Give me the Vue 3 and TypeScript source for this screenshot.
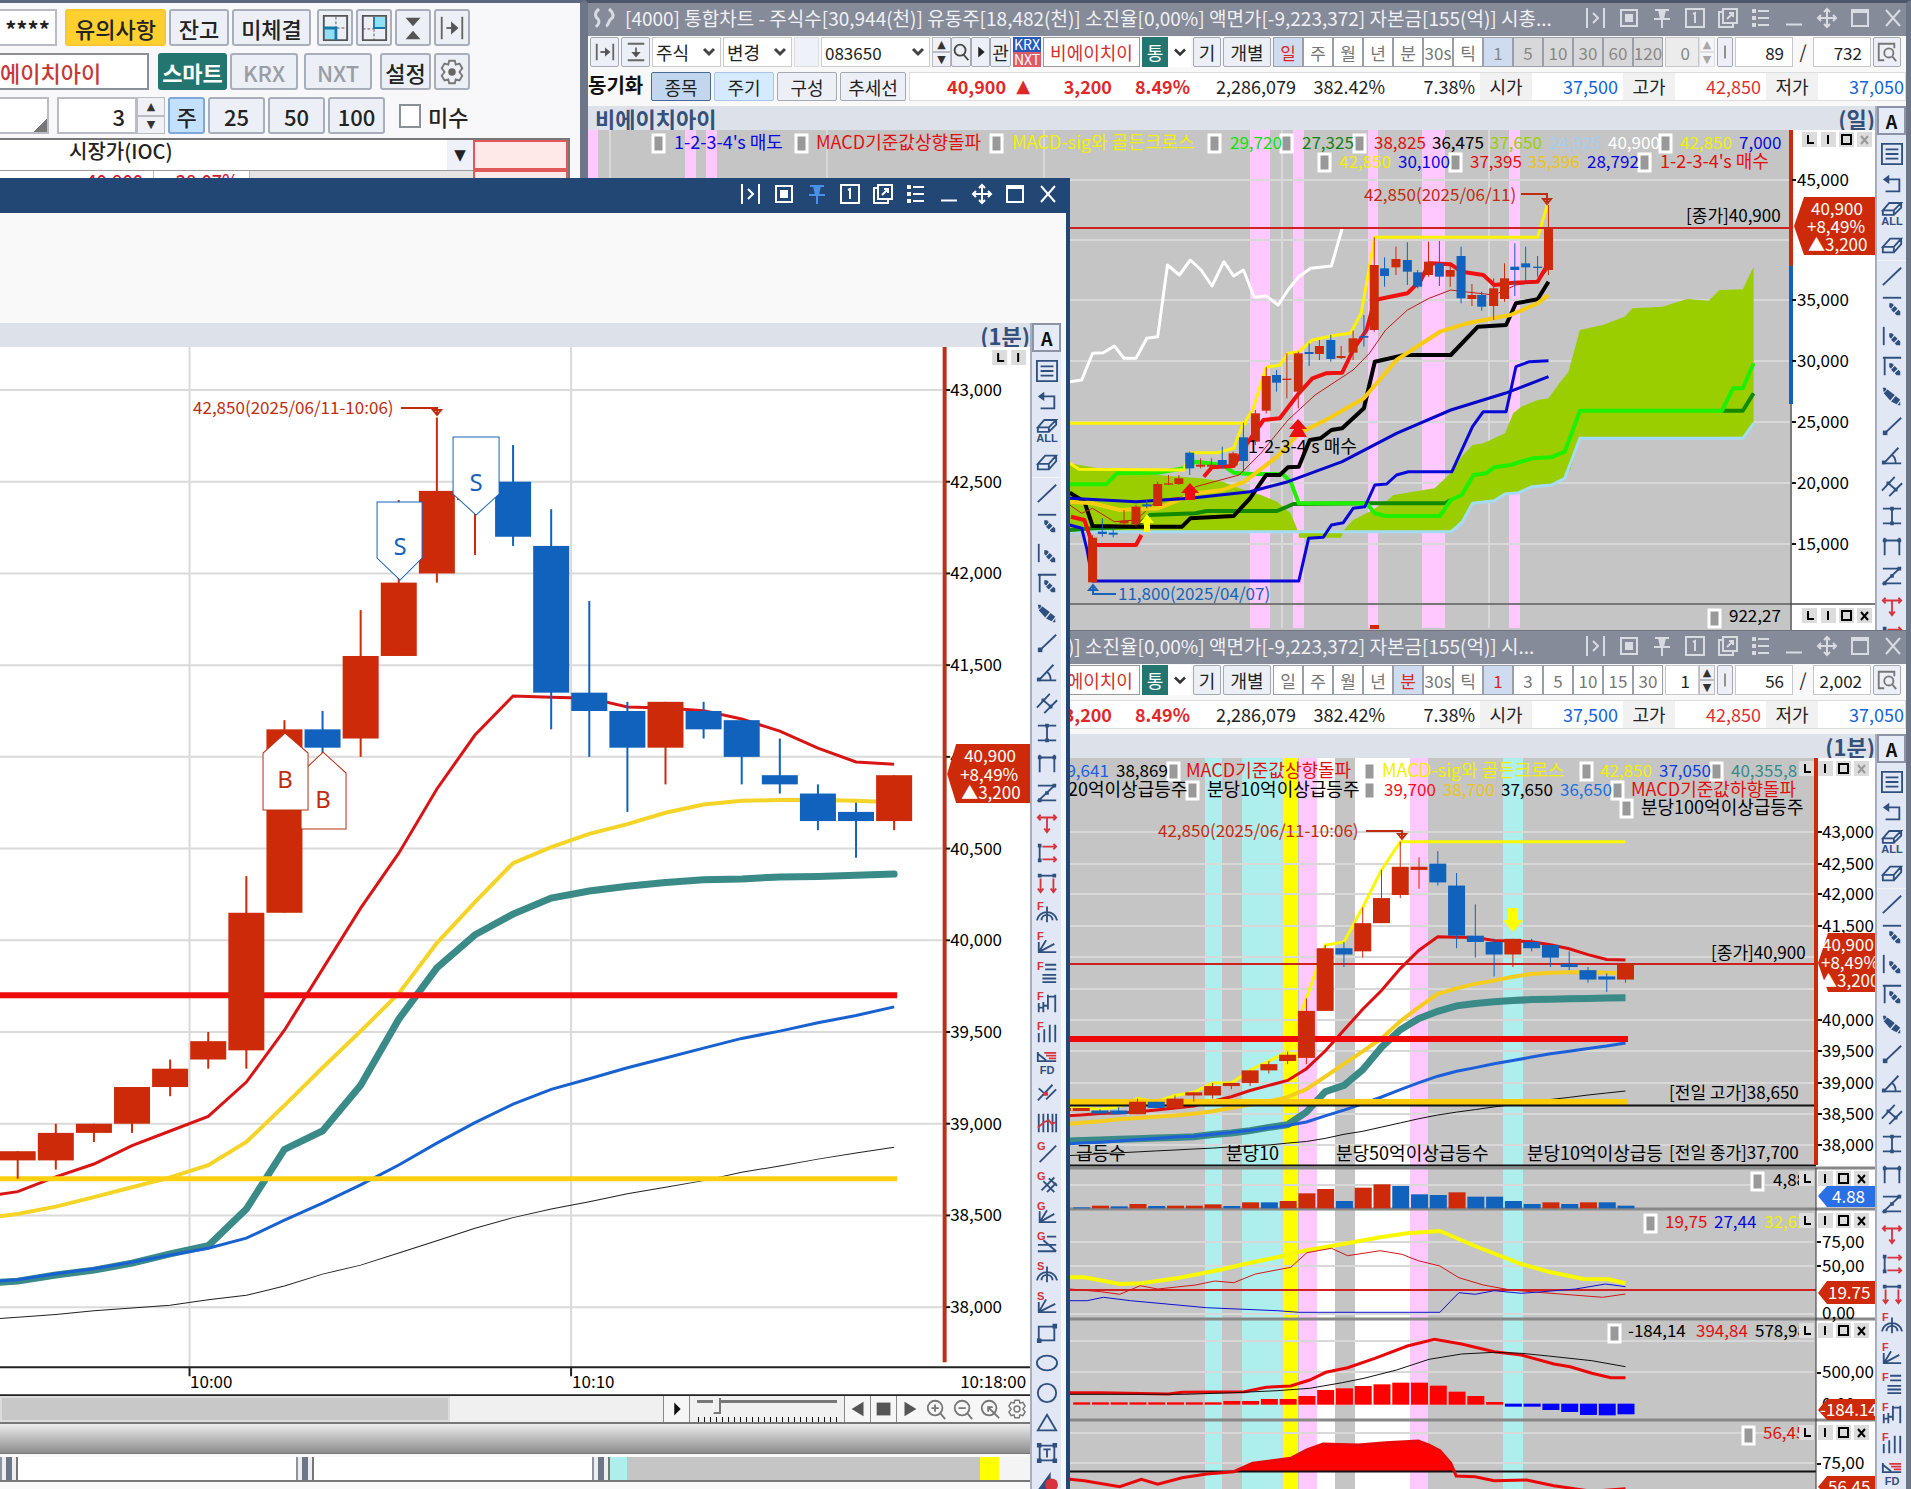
<script setup lang="ts">
type Pt = [number, number]
type Label = [number, number, string, string, number?]

/* ---------- one-minute series, newest bar first: open, close, high, low ---------- */
const bars: number[][] = [
  [40650, 40900, 40900, 40600], [40700, 40650, 40750, 40450], [40800, 40650, 40850, 40600],
  [40900, 40850, 41100, 40800], [41200, 41000, 41200, 40850], [41250, 41150, 41300, 41100],
  [41050, 41300, 41300, 40850], [41250, 41050, 41300, 40700], [41350, 41250, 41850, 41000],
  [42150, 41350, 42350, 41150], [42500, 42200, 42700, 42150], [42400, 42450, 42600, 42100],
  [42000, 42450, 42850, 41950], [41550, 41950, 42400, 41550], [41100, 41550, 41800, 41000],
  [41150, 41050, 41250, 40850], [40150, 41150, 41200, 40150], [39400, 40150, 40350, 39300],
  [39350, 39450, 39500, 39300], [39200, 39300, 39350, 39150], [39000, 39200, 39200, 38950],
  [38950, 39000, 39000, 38900], [38800, 38950, 39000, 38750], [38800, 38850, 38850, 38700],
  [38600, 38750, 38800, 38600], [38700, 38600, 38700, 38600], [38500, 38700, 38750, 38500],
  [38560, 38500, 38620, 38500], [38560, 38540, 38580, 38520], [38580, 38600, 38600, 38560],
  [38580, 38600, 38600, 38560],
]
const maRed = [40960, 40972, 41048, 41140, 41206, 41252, 41266, 41272, 41320, 41325, 41332, 41119, 40825, 40475, 40175, 39843, 39510, 39227, 39040, 38960, 38880, 38780, 38710, 38630, 38600, 38570, 38540, 38520, 38510, 38490, 38470]
const maGold = [40753, 40760, 40765, 40765, 40760, 40740, 40695, 40633, 40580, 40508, 40421, 40208, 39985, 39710, 39505, 39305, 39100, 38900, 38774, 38708, 38654, 38600, 38548, 38508, 38480, 38460, 38440, 38420, 38390, 38365, 38340]
const maTeal = [40361, 40355, 40348, 40345, 40335, 40330, 40315, 40295, 40268, 40230, 40143, 40030, 39850, 39570, 39210, 38960, 38860, 38535, 38335, 38290, 38240, 38202, 38175, 38142, 38130, 38120, 38110, 38100, 38090, 38080, 38070]
const maBlue = [39637, 39590, 39550, 39505, 39465, 39412, 39358, 39305, 39245, 39187, 39107, 39006, 38894, 38775, 38667, 38567, 38474, 38376, 38321, 38284, 38245, 38209, 38182, 38150, 38135, 38115, 38095, 38075, 38055, 38040, 38020]
const maBlack = [38872, 38840, 38807, 38770, 38735, 38690, 38654, 38618, 38574, 38535, 38488, 38430, 38362, 38295, 38229, 38180, 38115, 38065, 38040, 38010, 37995, 37980, 37960, 37945, 37930, 37915, 37900, 37885, 37870, 37850, 37835]

const RED = '#cc2a08'
const BLUE = '#1062bd'

function scale(x0: number, step: number, top: number, per500: number) {
  const x = (k: number) => x0 - k * step
  const y = (p: number) => top + ((43000 - p) / 500) * per500
  const line = (s: number[]) => s.map((p, k) => `${x(k).toFixed(1)},${y(p).toFixed(1)}`).join(' ')
  const candles = (n: number, w: number) => bars.slice(0, n).map((b, k) => ({
    x: x(k), w, top: y(Math.max(b[0], b[1])), h: Math.max(3, y(Math.min(b[0], b[1])) - y(Math.max(b[0], b[1]))),
    hi: y(b[2]), lo: y(b[3]), color: b[1] > b[0] ? RED : BLUE,
  }))
  return { x, y, line, candles }
}
const main = scale(894, 38.1, 390, 91.7)
const mini = scale(1625.5, 18.77, 832.3, 31.33)
const mainCandles = main.candles(24, 36)
const miniCandles = mini.candles(31, 17)
const mainTicks = [43000, 42500, 42000, 41500, 41000, 40500, 40000, 39500, 39000, 38500, 38000]
const fmt = (n: number) => n.toLocaleString('en-US')
const highs = bars.map((b, k) => (k < 12 ? 42850 : b[2]))

/* ---------- plot units of the right-hand charts ---------- */
const plot = (top: number) => (pts: Pt[]) => pts.map(([a, b]) => `${(1060 + a / 1.8425).toFixed(1)},${(top + b / 3).toFixed(1)}`).join(' ')
const dp = plot(180)
const sp = plot(1140)

const cloud = [
  dp([[18, 850], [60, 862], [100, 870], [150, 880], [200, 888], [260, 895], [300, 905], [330, 925], [370, 945], [400, 965], [425, 1000], [440, 1060], [440, 1052], [18, 1052]]),
  dp([[440, 1052], [522, 1052], [540, 1020], [570, 995], [600, 965], [615, 945], [650, 935], [690, 925], [720, 880], [740, 830], [760, 795], [780, 790], [820, 760], [835, 700], [850, 680], [880, 660], [900, 655], [920, 610], [937, 575], [958, 450], [1000, 435], [1040, 410], [1055, 385], [1110, 380], [1155, 357], [1195, 362], [1215, 330], [1258, 328], [1278, 260], [1278, 725], [1258, 770], [958, 775], [940, 870], [925, 900], [900, 915], [870, 918], [840, 940], [820, 940], [800, 962], [765, 965], [740, 1020], [720, 1052], [522, 1056], [518, 1073], [440, 1073]]),
]
const dayLines = [
  { c: '#a5dcf5', w: 3, p: dp([[18, 1055], [720, 1055], [740, 1030], [760, 970], [800, 962], [820, 942], [845, 938], [870, 920], [905, 915], [930, 895], [945, 830], [958, 775], [1258, 775], [1278, 730]]) },
  { c: '#128a00', w: 4, p: dp([[18, 1050], [60, 1045], [140, 1040], [165, 1005], [250, 1000], [270, 993], [400, 993], [430, 972], [565, 970], [710, 970], [720, 960]]) },
  { c: '#128a00', w: 4, p: dp([[1220, 692], [1258, 692], [1278, 640]]) },
  { c: '#1ef000', w: 4, p: dp([[18, 913], [85, 913], [105, 880], [180, 878], [228, 865], [250, 845], [300, 855], [320, 878], [350, 882], [410, 882], [425, 905], [440, 970], [565, 970], [580, 1000], [600, 1008], [700, 1008], [720, 960], [740, 945], [762, 885], [785, 880], [800, 862], [830, 855], [870, 835], [905, 832], [930, 815], [945, 750], [958, 692], [1220, 692], [1240, 625], [1258, 625], [1278, 550]]) },
  { c: '#fff200', w: 3, p: dp([[18, 730], [345, 730]]) },
  { c: '#fff200', w: 3, p: dp([[18, 850], [35, 868], [228, 870], [240, 818], [290, 818], [320, 805], [335, 740], [355, 690], [380, 562], [405, 555], [420, 520], [440, 515], [465, 480], [510, 465], [535, 460], [555, 400], [580, 172], [880, 172], [898, 75]]) },
  { c: '#ffffff', w: 3, p: dp([[18, 605], [40, 600], [60, 520], [80, 518], [100, 498], [118, 535], [140, 535], [160, 475], [180, 470], [198, 255], [220, 285], [240, 240], [260, 270], [280, 318], [302, 245], [320, 288], [338, 270], [358, 352], [380, 348], [402, 375], [420, 330], [440, 290], [462, 265], [500, 258], [520, 145]]) },
  { c: '#000000', w: 4, p: dp([[18, 938], [45, 965], [60, 1038], [140, 1040], [225, 1040], [240, 1015], [320, 1008], [350, 955], [365, 920], [380, 885], [405, 885], [420, 862], [440, 860], [460, 780], [480, 775], [500, 750], [520, 745], [560, 685], [580, 545], [635, 525], [720, 525], [770, 440], [822, 435], [840, 370], [880, 358], [900, 305]]) },
  { c: '#f01010', w: 4, p: dp([[20, 1010], [45, 1020], [60, 1095], [140, 1095], [150, 1065]]) },
  { c: '#f01010', w: 4, p: dp([[265, 890], [280, 862], [320, 858], [345, 790], [375, 720], [405, 715], [440, 640], [465, 595], [490, 580], [520, 578], [540, 510], [565, 450], [580, 360], [640, 340], [665, 300], [680, 250], [720, 253], [740, 275], [780, 285], [800, 315], [835, 308], [880, 305], [898, 255]]) },
  { c: '#c81818', w: 1, p: dp([[18, 975], [40, 1000], [60, 985], [100, 1025], [140, 1020], [180, 960], [230, 950], [250, 920], [330, 885], [370, 820], [420, 720], [470, 645], [540, 570], [570, 520], [600, 450], [640, 390], [680, 355], [720, 330], [745, 335], [800, 345], [840, 315], [880, 305], [898, 270]]) },
  { c: '#f8cc10', w: 4, p: dp([[18, 965], [60, 970], [110, 990], [180, 985], [250, 940], [300, 930], [340, 905], [400, 830], [440, 760], [490, 720], [560, 655], [620, 540], [700, 455], [750, 430], [830, 405], [880, 370], [900, 345]]) },
  { c: '#0808c8', w: 3, p: dp([[18, 955], [140, 965], [240, 955], [350, 935], [420, 905], [520, 845], [620, 760], [720, 690], [820, 640], [900, 590]]) },
  { c: '#0808d8', w: 3, p: dp([[18, 1035], [40, 1045], [50, 1110], [60, 1203], [440, 1203], [458, 1075], [485, 1072], [500, 1035], [522, 1028], [540, 985], [562, 980], [580, 915], [602, 912], [620, 885], [642, 875], [722, 875], [760, 740], [780, 695], [822, 695], [840, 560], [865, 545], [900, 542]]) },
]
/* centre, body top, body bottom, wick top, wick bottom, rising */
const dayRaw: number[][] = [
  [60, 1073, 1207, 1065, 1207, 1], [78, 1055, 1062, 1015, 1070, 0], [98, 1058, 1064, 1045, 1072, 0], [118, 1022, 1030, 990, 1035, 1], [140, 980, 1033, 975, 1040, 1],
  [160, 973, 979, 960, 985, 0], [180, 912, 978, 905, 978, 1], [200, 910, 914, 885, 915, 1], [219, 895, 912, 885, 915, 1], [239, 818, 865, 815, 885, 0], [259, 854, 860, 835, 865, 1],
  [279, 854, 860, 835, 870, 1], [299, 840, 855, 800, 865, 0], [319, 820, 857, 815, 860, 1], [338, 772, 843, 728, 875, 0], [360, 700, 785, 690, 795, 1], [380, 588, 692, 562, 700, 1],
  [399, 585, 608, 570, 635, 0], [418, 596, 600, 520, 655, 1], [439, 520, 635, 515, 685, 1], [459, 516, 522, 490, 558, 0], [478, 498, 522, 480, 540, 1], [499, 480, 537, 465, 545, 0],
  [518, 528, 534, 498, 537, 1], [540, 475, 518, 452, 540, 1], [560, 468, 473, 405, 500, 0], [579, 255, 450, 172, 455, 1], [598, 265, 288, 232, 320, 0], [619, 237, 262, 200, 285, 1],
  [640, 240, 275, 187, 315, 0], [659, 277, 320, 270, 325, 0], [679, 245, 285, 185, 290, 1], [699, 250, 290, 183, 318, 0], [719, 270, 290, 255, 320, 1], [739, 228, 355, 200, 370, 0],
  [759, 345, 357, 312, 378, 1], [777, 345, 380, 335, 392, 0], [799, 325, 378, 295, 420, 1], [819, 295, 357, 250, 365, 1], [838, 260, 270, 190, 348, 0], [858, 250, 262, 200, 310, 0],
  [880, 260, 264, 228, 290, 0], [900, 143, 270, 75, 285, 1],
]
const dayCandles = dayRaw.map(([x, t, b, hi, lo, up]) => ({
  x: 1060 + x / 1.8425, w: 9, top: 180 + t / 3, h: (b - t) / 3, hi: 180 + hi / 3, lo: 180 + lo / 3, color: up ? RED : BLUE,
}))
const dayBands: Pt[] = [[588, 10], [685, 11], [706, 11], [1250, 20], [1293, 11], [1368, 10], [1422, 23], [1509, 11]]
const dayTicks: [number, string][] = [[180, '45,000'], [300, '35,000'], [361, '30,000'], [422, '25,000'], [483, '20,000'], [544, '15,000']]
const dayLabels: Label[] = [
  [674, 149, "1-2-3-4's 매도", '#0808e0', 1], [816, 149, 'MACD기준값상향돌파', '#e01010', 1], [1012, 149, 'MACD-sig와 골든크로스', '#f0f000', 1],
  [1230, 149, '29,720', '#10e010'], [1302, 149, '27,325', '#108010'], [1374, 149, '38,825', '#e01010'], [1432, 149, '36,475', '#000'],
  [1490, 149, '37,650', '#9bce00'], [1549, 149, '24,925', '#a5cdeb'], [1608, 149, '40,900', '#fff'], [1680, 149, '42,850', '#f0f000'], [1739, 149, '7,000', '#0808e0'],
  [1339, 168, '42,850', '#f0f000'], [1398, 168, '30,100', '#0808e0'], [1470, 168, '37,395', '#e01010'], [1528, 168, '35,396', '#ecc418'], [1587, 168, '28,792', '#0808e0'],
  [1660, 168, "1-2-3-4's 매수", '#e01010', 1], [1364, 201, '42,850(2025/06/11)', '#c02c10'], [1686, 222, '[종가]40,900', '#000'],
  [1248, 453, "1-2-3-4's 매수", '#000', 1], [1118, 600, '11,800(2025/04/07)', '#1862b8'], [1729, 622, '922,27', '#000'],
]
const dayMarks: Pt[] = [[652, 134], [795, 134], [990, 134], [1208, 134], [1280, 134], [1353, 134], [1659, 134], [1318, 153], [1449, 153], [1638, 153], [1708, 609]]

const minBands: [number, number, string][] = [
  [1205, 17, '#aeeeec'], [1242, 39, '#aeeeec'], [1281, 17, '#ffff00'], [1299, 18, '#ffc8ff'], [1317, 18, '#fff'], [1355, 55, '#fff'], [1410, 18, '#ffc8ff'], [1503, 20, '#aeeeec'],
]
const minTicks: [number, string][] = [[832, '43,000'], [864, '42,500'], [894, '42,000'], [926, '41,500'], [1020, '40,000'], [1051, '39,500'], [1083, '39,000'], [1114, '38,500'], [1145, '38,000']]
const minLabels: Label[] = [
  [1057, 777, '39,641', '#1c5fe0'], [1116, 777, '38,869', '#000'], [1186, 777, 'MACD기준값상향돌파', '#e01010', 1], [1382, 777, 'MACD-sig와 골든크로스', '#f0f000', 1],
  [1600, 777, '42,850', '#f0f000'], [1659, 777, '37,050', '#0c40e0'], [1731, 777, '40,355,8', '#3a8a88'],
  [1068, 796, '20억이상급등주', '#000', 1], [1207, 796, '분당10억이상급등주', '#000', 1], [1384, 796, '39,700', '#f01020'], [1443, 796, '38,700', '#ecc418'],
  [1501, 796, '37,650', '#000'], [1560, 796, '36,650', '#1c6fe0'], [1631, 796, 'MACD기준값하향돌파', '#e01010', 1], [1641, 814, '분당100억이상급등주', '#000', 1],
  [1158, 837, '42,850(2025/06/11-10:06)', '#c02c10'], [1711, 959, '[종가]40,900', '#000'], [1669, 1099, '[전일 고가]38,650', '#000'], [1669, 1159, '[전일 종가]37,700', '#000'],
  [1076, 1160, '급등수', '#000', 1], [1226, 1160, '분당10', '#000', 1], [1336, 1160, '분당50억이상급등수', '#000', 1], [1527, 1160, '분당10억이상급등', '#000', 1],
  [1773, 1186, '4,88', '#000'], [1665, 1228, '19,75', '#e01010'], [1714, 1228, '27,44', '#0808e0'], [1764, 1228, '32,62', '#f0f000'],
  [1628, 1337, '-184,14', '#000'], [1696, 1337, '394,84', '#e01010'], [1755, 1337, '578,98', '#000'], [1763, 1439, '56,45', '#e01010'],
]
const minMarks: Pt[] = [[1167, 762], [1363, 762], [1580, 762], [1710, 762], [1186, 781], [1363, 781], [1611, 781], [1620, 799], [1751, 1172], [1644, 1214], [1608, 1324], [1742, 1426]]
const lixRows: [number, number][] = [[1799, 761], [1799, 1171], [1799, 1213], [1799, 1323], [1799, 1425]]

const volume: [number, number][] = [
  [197, 0], [187, 0], [187, 1], [192, 0], [187, 1], [192, 0], [183, 0], [170, 0], [170, 0], [157, 1], [165, 0], [163, 0], [138, 0], [133, 1], [143, 1], [183, 0],
  [147, 1], [160, 1], [183, 1], [187, 0], [187, 1], [198, 0], [193, 1], [197, 1], [197, 1], [198, 0], [192, 1], [199, 0], [197, 1], [202, 0],
]
const hist = [820, 823, 822, 813, 807, 797, 797, 786, 768, 755, 737, 728, 728, 733, 738, 745, 750, 768, 777, 777, 783, 783, 787, 787, 787, 787, 787, 787, 787, 787]
const subLines = [
  { c: '#f8f800', w: 4, p: sp([[18, 412], [45, 412], [110, 432], [150, 430], [215, 415], [300, 388], [340, 372], [400, 352], [450, 332], [540, 307], [590, 292], [640, 280], [700, 273], [760, 315], [850, 372], [900, 395], [965, 417], [1010, 418], [1042, 430]]) },
  { c: '#d01818', w: 1, p: sp([[18, 447], [75, 455], [110, 463], [148, 437], [180, 447], [250, 435], [285, 423], [320, 428], [360, 402], [425, 382], [455, 338], [500, 325], [530, 347], [590, 332], [630, 343], [660, 362], [700, 378], [735, 413], [780, 435], [830, 450], [890, 458], [1000, 472], [1042, 462]]) },
  { c: '#1010d0', w: 1, p: sp([[18, 482], [50, 482], [80, 472], [130, 482], [270, 503], [400, 512], [440, 517], [700, 517], [735, 458], [765, 463], [800, 452], [850, 460], [890, 455], [950, 447], [1005, 432], [1042, 440]]) },
  { c: '#e80808', w: 3, p: sp([[18, 758], [75, 758], [200, 762], [225, 757], [340, 755], [380, 742], [425, 738], [460, 720], [490, 697], [530, 683], [580, 655], [640, 618], [690, 598], [740, 612], [800, 635], [850, 645], [910, 672], [940, 680], [980, 700], [1015, 713], [1042, 713]]) },
  { c: '#101010', w: 1, p: sp([[18, 763], [230, 763], [320, 758], [400, 752], [460, 745], [520, 728], [560, 715], [620, 690], [680, 658], [740, 642], [800, 637], [850, 640], [900, 648], [980, 662], [1042, 680]]) },
  { c: '#e80808', w: 3, p: sp([[18, 1018], [45, 1022], [110, 1040], [150, 1018], [180, 1033], [225, 1013], [270, 1002], [320, 995], [355, 970], [425, 955], [455, 930], [485, 912], [550, 915], [600, 908], [660, 903], [680, 915], [700, 932], [720, 970], [730, 1008], [765, 1010], [800, 1022], [860, 1020], [910, 1037], [980, 1054], [1042, 1046]]) },
]
const rsiArea = sp([[320, 995], [355, 970], [425, 955], [455, 930], [485, 912], [550, 915], [600, 908], [660, 903], [680, 915], [700, 932], [720, 970], [730, 995]])
const subTicks: [number, string][] = [[1242, '75,00'], [1266, '50,00'], [1313, '0,00'], [1372, '500,00'], [1404, '0,00'], [1463, '75,00']]

/* ---------- windows ---------- */
const windows = [
  {
    id: 'day', title: '[4000] 통합차트 - 주식수[30,944(천)] 유동주[18,482(천)] 소진율[0,00%] 액면가[-9,223,372] 자본금[155(억)] 시총...',
    period: '일', mins: ['1', '5', '10', '30', '60', '120'], off: true, n: '0', pos: '89', total: '732', span: '(일)',
  },
  {
    id: 'min', title: '[4000] 통합차트 - 주식수[30,944(천)] 유동주[18,482(천)] 소진율[0,00%] 액면가[-9,223,372] 자본금[155(억)] 시...',
    period: '분', mins: ['1', '3', '5', '10', '15', '30'], off: false, n: '1', pos: '56', total: '2,002', span: '(1분)',
  },
]
const periods = ['일', '주', '월', '년', '분', '30s', '틱']
const caps: { name: string; d: string; f?: string }[] = [
  { name: '펼치기', d: 'M3 2V22M20 2V22M9 7l5 5-5 5' },
  { name: '화면 고정', d: 'M4 4H20V20H4Z', f: 'M8 8h8v8H8z' },
  { name: '핀', d: 'M5 4H19M4 13H20M12 13V22', f: 'M8 4h8l-2 9h-4z' },
  { name: '화면 번호', d: 'M3 3H21V21H3ZM10 8l2-1V17' },
  { name: '새 창', d: 'M7 3H21V17H7ZM7 6H3V21H17V17M11 13l6-6M13 7h4v4' },
  { name: '목록', d: 'M9 5H20M9 12H20M9 19H20', f: 'M3 3h4v4H3zM3 10h4v4H3zM3 17h4v4H3z' },
  { name: '최소화', d: 'M4 18.500H20' },
  { name: '이동', d: 'M12 4V20M4 12H20M9 6l3-3 3 3M9 18l3 3 3-3M6 9l-3 3 3 3M18 9l3 3-3 3' },
  { name: '최대화', d: 'M4 4H20V20H4ZM4 6H20' },
  { name: '닫기', d: 'M5 4L19 20M19 4L5 20' },
]

const pen = 'M9 9h3l2 2-3 4-2-2zM15 12l3 3-4 4-3-3zM19 16l2 2 0 4-4 0-2-2z'
const ARC = 'M1 20C2 14 7 11 12 11s10 3 11 9M6 20c0-4 3-6 6-6s6 2 6 6M12 5V22'
const tools: { name: string; d?: string; f?: string; r?: string; rf?: string; t?: string; tc?: string; sub?: string }[] = [
  { name: '목록', d: 'M1 1H23V23H1ZM5 7H19M5 12H19M5 17H19' },
  { name: '되돌리기', d: 'M6 7H20V20H5', f: 'M9 2v10L2 7z' },
  { name: '전체 삭제', d: 'M2 8L9 0H22L14 8ZM2 8V13H14V8M14 13L22 5V0', sub: 'ALL' },
  { name: '삭제', d: 'M2 14L10 5H22L14 14ZM2 14V20H14V14M14 20L22 11V5' },
  { name: '추세선', d: 'M2 22L22 3' },
  { name: '수평선', d: 'M2 3H22', f: pen },
  { name: '수직선', d: 'M3 2V22', f: pen },
  { name: '십자선', d: 'M2 3H22M4 3V22', f: pen },
  { name: '펜', f: 'M2 3h3l1 2-3 3zM7 5l8 6-5 6-7-8zM16 12l5 4-4 5-6-3zM21 18v4h-3z' },
  { name: '선분', d: 'M4 20L22 3', f: 'M2 17h5v5H2z' },
  { name: '각도', d: 'M19 3L3 20H22M12 11c3 2 4 5 4 9', f: 'M1 17h4v4H1z' },
  { name: '평행선', d: 'M1 17L15 2M9 23L23 9M8 9l8 7', f: 'M6 7h4v4H6zM14 14h4v4h-4z' },
  { name: '수직 범위', d: 'M2 4H22M2 20H22M12 4V20', f: 'M10 2h4v4h-4zM10 18h4v4h-4z' },
  { name: '수평 범위', d: 'M4 3V22M20 3V22M4 6H20', f: 'M2 4h4v4H2zM18 4h4v4h-4z' },
  { name: '파동', d: 'M2 4H20L3 20H22', f: 'M18 2h4v4h-4zM10 10h4v4h-4zM2 18h4v4H2z' },
  { name: '화살표 T', r: 'M2 6H22M5 3L2 6l3 3M19 3l3 3-3 3M12 6V22M9 18l3 4 3-4' },
  { name: '우측 확장', d: 'M4 4V20', f: 'M2 2h4v4H2zM2 18h4v4H2z', r: 'M7 5H22M19 2l3 3-3 3M7 19H22M19 16l3 3-3 3' },
  { name: '하향 확장', d: 'M4 4H20', f: 'M2 2h4v4H2zM18 2h4v4h-4z', r: 'M5 7V22M2 18l3 4 3-4M19 7V22M16 18l3 4 3-4' },
  { name: '피보나치 원', d: ARC, t: 'F' },
  { name: '피보나치 팬', d: 'M3 11V22H22M3 22L11 9M3 22L20 13', t: 'F' },
  { name: '피보나치 되돌림', d: 'M10 3H22M10 8H22M7 14H22M7 18H22M7 22H22', t: 'F' },
  { name: '피보나치 목표', d: 'M3 12V22M8 11V22M3 17H8M13 3V19M8 15H13M13 5H21M21 3V22', t: 'F' },
  { name: '피보나치 시간', d: 'M3 12V22M9 8V22M15 3V22M21 3V22', t: 'F' },
  { name: '가격 분포', d: 'M2 0V10H22M2 2L11 9', r: 'M9 1H22M11 4H22M14 7H22', sub: 'FD' },
  { name: '피치포크', d: 'M2 20L18 3M3 7l8 7M11 19L22 8', rf: 'M8 11h5v4H8z' },
  { name: '사이클', d: 'M3 2V22M8 2V22M13 2V22M18 2V22M22 2V22', r: 'M2 17L9 11 14 9 17 13 22 11' },
  { name: '갠 라인', d: 'M4 22L22 4', t: 'G' },
  { name: '갠 그리드', d: 'M6 20L20 6M12 22L22 12M8 10L20 22M14 7L23 15', t: 'G' },
  { name: '갠 팬', d: 'M4 10V22H22M4 22L12 9M4 22L20 13', t: 'G' },
  { name: '갠 되돌림', d: 'M12 5H22M2 14H22M2 21H22M8 9L22 21', t: 'G' },
  { name: '속도 원', d: ARC, t: 'S' },
  { name: '속도 팬', d: 'M3 11V22H22M3 22L11 8M3 22L21 13', t: 'S' },
  { name: '사각형', d: 'M3 5H20V20H3Z', f: 'M18 2h5v5h-5zM1 18h5v5H1z' },
  { name: '타원', d: 'M1 12a11 8 0 1 0 22 0a11 8 0 1 0-22 0' },
  { name: '원', d: 'M2 12a10 10 0 1 0 20 0a10 10 0 1 0-20 0' },
  { name: '삼각형', d: 'M12 3L22 20H2Z' },
  { name: '문자', d: 'M4 4H20V20H4ZM8 8H16M12 8V17', f: 'M1 1h5v5H1zM18 1h5v5h-5zM1 18h5v5H1zM18 18h5v5h-5z' },
  { name: '도형', f: 'M0 22L16 0V22z', rf: 'M10 14a7 7 0 1 0 14 0a7 7 0 1 0-14 0' },
]
</script>

<template>
  <div class="desktop">
    <!-- order ticket -->
    <section class="order">
      <div class="orow">
        <input class="box stars" value="****" aria-label="비밀번호" />
        <button class="ob yellow">유의사항</button>
        <button class="ob w60">잔고</button>
        <button class="ob w79">미체결</button>
        <span class="icons">
          <button class="ob ic" aria-label="좌측 배치"><svg viewBox="0 0 30 30"><path d="M3 16H16V27H3Z" fill="#8fe0f5" /><path d="M3 2H28V28H3Z" fill="none" stroke="#555" stroke-width="2" /><path d="M16 3V14M17 15H28" stroke="#555" stroke-dasharray="3 2" /><path d="M3 15H16V28" fill="none" stroke="#1578a8" stroke-width="3" /></svg></button>
          <button class="ob ic" aria-label="우측 배치"><svg viewBox="0 0 30 30"><path d="M16 3H27V15H16Z" fill="#8fe0f5" /><path d="M3 2H28V28H3Z" fill="none" stroke="#555" stroke-width="2" /><path d="M15 16V28M3 16H14" stroke="#555" stroke-dasharray="3 2" /><path d="M15 3V15H27" fill="none" stroke="#1578a8" stroke-width="2" /></svg></button>
          <button class="ob ic" aria-label="접기"><svg viewBox="0 0 30 30"><path d="M7 4H23L15 13ZM7 27H23L15 18Z" fill="#555" /></svg></button>
          <button class="ob ic" aria-label="폭 맞춤"><svg viewBox="0 0 30 30"><path d="M4 3V27M26 3V27M9 15H18" stroke="#666" stroke-width="2" /><path d="M14 8l8 7-8 7z" fill="#555" /></svg></button>
        </span>
      </div>
      <div class="orow">
        <input class="box name" value="에이치아이" aria-label="종목명" />
        <button class="ob teal">스마트</button>
        <button class="ob dim">KRX</button>
        <button class="ob dim">NXT</button>
        <span class="icons">
          <button class="ob w51">설정</button>
          <button class="ob ic" aria-label="환경설정"><svg viewBox="0 0 30 30"><path d="M12 3h6l1 4 4-1 3 5-3 4 3 4-3 5-4-1-1 4h-6l-1-4-4 1-3-5 3-4-3-4 3-5 4 1z" fill="none" stroke="#777" stroke-width="2" /><circle cx="15" cy="15" r="4" fill="#666" /></svg></button>
        </span>
      </div>
      <div class="orow">
        <span class="box corner"></span>
        <span class="qty"><input class="box" value="3" aria-label="수량" /><span class="spin"><button aria-label="증가">▲</button><button aria-label="감소">▼</button></span></span>
        <button class="ob on">주</button>
        <button class="ob w57">25</button>
        <button class="ob w57">50</button>
        <button class="ob w57">100</button>
        <label class="check"><input type="checkbox" />미수</label>
      </div>
      <div class="grid">
        <div class="gcell type">시장가(IOC)</div>
        <button class="gdrop" aria-label="주문유형">▼</button>
        <div class="gred"></div>
        <div class="gval"><span>40,900</span><span>28.07%</span><i></i></div>
        <div class="gred"></div>
      </div>
    </section>

    <!-- daily and minute chart windows -->
    <section v-for="w in windows" :key="w.id" class="win" :class="w.id">
      <header class="bar">
        <svg class="logo" viewBox="0 0 24 24"><path d="M7 3C2 7 3 11 6 13c2 2 1 5-2 8M17 3c5 4 5 8 2 10s-2 6-5 7" fill="none" stroke="#d8dbe2" stroke-width="3" /></svg>
        <h2>{{ w.title }}</h2>
        <button v-for="c in caps" :key="c.name" :aria-label="c.name"><svg viewBox="0 0 24 24"><path :d="c.d" fill="none" stroke="currentColor" stroke-width="2" /><path v-if="c.f" :d="c.f" fill="currentColor" /></svg></button>
      </header>
      <div class="tools">
        <button class="tb w29" aria-label="폭 맞춤"><svg viewBox="0 0 24 24"><path d="M3 3V21M21 3V21M7 12H14" stroke="#666" stroke-width="2" /><path d="M12 7l6 5-6 5z" fill="#555" /></svg></button>
        <button class="tb w29" aria-label="높이 맞춤"><svg viewBox="0 0 24 24"><path d="M3 3H21M3 21H21M12 7V14" stroke="#666" stroke-width="2" /><path d="M7 12l5 6 5-6z" fill="#555" /></svg></button>
        <select class="w69" aria-label="시장"><option>주식</option></select>
        <select class="w69" aria-label="변경"><option>변경</option></select>
        <span class="blank"></span>
        <select class="code" aria-label="종목코드"><option>083650</option></select>
        <span class="grp">
          <span class="spin s19"><button aria-label="다음 종목">▲</button><button aria-label="이전 종목">▼</button></span>
          <button class="tb w20" aria-label="검색"><svg viewBox="0 0 18 24"><circle cx="8" cy="10" r="6" fill="none" stroke="#444" stroke-width="2" /><path d="M12 15l5 6" stroke="#444" stroke-width="2" /></svg></button>
          <button class="tb w19" aria-label="더보기"><svg viewBox="0 0 18 24"><path d="M6 6l7 6-7 6z" fill="#222" /></svg></button>
          <button class="tb w21">관</button>
        </span>
        <span class="badge"><b>KRX</b><b>NXT</b></span>
        <input class="stock" value="비에이치이" aria-label="종목명" />
        <span class="grp"><button class="tong">통</button><button class="drop" aria-label="거래소 선택"><svg viewBox="0 0 24 24"><path d="M6 9l6 6 6-6" fill="none" stroke="#333" stroke-width="3" /></svg></button></span>
        <button class="tb w28">기</button>
        <button class="tb w48">개별</button>
        <span class="grp">
          <button v-for="p in periods" :key="p" class="pb" :class="{ sel: p === w.period }">{{ p }}</button>
          <button v-for="(m, i) in w.mins" :key="m" class="pb" :class="{ off: w.off && i > 0, tint: w.off && i === 0, sel: !w.off && i === 0 }">{{ m }}</button>
        </span>
        <span class="grp"><input class="num w34" :class="{ off: w.off }" :value="w.n" aria-label="분 간격" /><span class="spin s16" :class="{ pale: w.off }"><button aria-label="간격 증가">▲</button><button aria-label="간격 감소">▼</button></span></span>
        <button class="tb w16" aria-label="구분"><svg viewBox="0 0 12 24"><path d="M6 5V19" stroke="#888" stroke-width="2" /></svg></button>
        <input class="num w58" :value="w.pos" aria-label="표시 개수" />
        <span class="slash">/</span>
        <input class="num w58" :value="w.total" aria-label="전체 개수" />
        <button class="tb w28" aria-label="기간 조회"><svg viewBox="0 0 24 24"><path d="M20 8V3H3V21H9" fill="none" stroke="#777" stroke-width="2" /><circle cx="14" cy="13" r="5" fill="none" stroke="#777" stroke-width="2" /><path d="M18 17l4 5" stroke="#777" stroke-width="2" /></svg></button>
      </div>
      <div class="quote">
        <b class="sync">동기화</b>
        <button class="tb q60 deep">종목</button>
        <button class="tb q60 light">주기</button>
        <button class="tb q60">구성</button>
        <button class="tb q66">추세선</button>
        <div class="vals">
          <b class="r v1">40,900</b><b class="r v2">▲</b><b class="r v3">3,200</b><b class="r v4">8.49%</b>
          <span class="v5">2,286,079</span><span class="v6">382.42%</span><span class="v7">7.38%</span>
          <em>시가</em><span class="bl v8">37,500</span><em>고가</em><span class="rd v8">42,850</span><em>저가</em><span class="bl v8">37,050</span>
        </div>
      </div>
      <div class="body">
        <div class="plotcol">
          <div class="strip"><b>{{ w.id === 'day' ? '비에이치아이' : '' }}</b><b>{{ w.span }}</b></div>

          <svg v-if="w.id === 'day'" class="chart" viewBox="588 130 1287 500">
            <rect x="588" y="130" width="1204" height="500" fill="#c5c5c5" />
            <rect x="1792" y="130" width="83" height="500" fill="#fff" />
            <rect v-for="b in dayBands" :key="b[0]" :x="b[0]" y="130" :width="b[1]" height="498" fill="#ffc8ff" />
            <path d="M588 180H1790M588 240H1790M588 300H1790M588 361H1790M588 422H1790M588 483H1790M588 544H1790M610 130V604M827 130V604M1044 130V604M1282 130V628M1489 130V628" class="gl" />
            <polygon v-for="(c, i) in cloud" :key="i" :points="c" fill="#9bce00" />
            <polyline v-for="(l, i) in dayLines" :key="i" :points="l.p" fill="none" :stroke="l.c" :stroke-width="l.w" stroke-linejoin="round" />
            <path d="M588 228H1790" stroke="#d02020" stroke-width="2" />
            <g v-for="(c, i) in dayCandles" :key="i">
              <line :x1="c.x" :x2="c.x" :y1="c.hi" :y2="c.lo" :stroke="c.color" />
              <rect :x="c.x - c.w / 2" :y="c.top" :width="c.w" :height="c.h" :fill="c.color" />
            </g>
            <path d="M1298 419l9 10h-5l5 8h-18l5-8h-5zM1190 483l9 10h-4v7h-10v-7h-4z" fill="#e81010" />
            <path d="M1147 514l7 9h-4v9h-6v-9h-4z" fill="#ffff00" />
            <path d="M1521 194H1547V202M1543 199l4 5 4-5z" class="con" />
            <path d="M1116 594H1093V587M1089 590l4-5 4 5z" class="con b" />
            <path d="M588 604H1875" stroke="#777" stroke-width="2" />
            <rect x="1370" y="625" width="9" height="4" :fill="RED" />
            <g v-for="m in dayMarks" :key="m[0] + '-' + m[1]"><rect :x="m[0] + 1" :y="m[1] + 1" width="11" height="17" fill="#999" stroke="#fff" stroke-width="3" /></g>
            <text v-for="(l, i) in dayLabels" :key="i" :x="l[0]" :y="l[1]" :fill="l[3]" :class="{ ko: l[4] }">{{ l[2] }}</text>
            <path d="M1791 130V266" :stroke="RED" stroke-width="4" />
            <path d="M1791 266V404" :stroke="BLUE" stroke-width="4" />
            <path d="M1791 404V630" stroke="#333" />
            <path d="M1792 180h4M1792 300h4M1792 361h4M1792 422h4M1792 483h4M1792 544h4" stroke="#111" stroke-width="2" />
            <text v-for="t in dayTicks" :key="t[0]" x="1797" :y="t[0] + 6">{{ t[1] }}</text>
            <path d="M1794 226L1804 197H1875V255H1804Z" :fill="RED" />
            <g fill="#fff"><text x="1811" y="215">40,900</text><text x="1807" y="233">+8,49%</text><text x="1808" y="251">▲3,200</text></g>
            <g v-for="y in [132, 608]" :key="y" :transform="`translate(1802 ${y})`" class="lix">
              <path d="M0 0h15v15H0zM19 0h15v15H19zM37 0h15v15H37zM55 0h15v15H55z" class="lbg" />
              <path d="M6 3V11H12M26 3V12M40 3H49V12H40Z" /><path d="M59 4l7 8M66 4l-7 8" :class="{ weak: y === 132 }" />
            </g>
          </svg>

          <svg v-else class="chart" viewBox="588 758 1287 731">
            <rect x="588" y="758" width="1228" height="731" fill="#c5c5c5" />
            <rect x="1816" y="758" width="59" height="731" fill="#fff" />
            <rect v-for="b in minBands" :key="b[0]" :x="b[0]" y="758" :width="b[1]" height="731" :fill="b[2]" />
            <path d="M588 832H1814M588 864H1814M588 894H1814M588 926H1814M588 957H1814M588 989H1814M588 1020H1814M588 1051H1814M588 1083H1814M588 1114H1814M588 1145H1814M588 1185H1814M588 1242H1814M588 1266H1814M588 1314H1814M588 1341H1814M588 1372H1814M588 1433H1814M588 1463H1814M1282 758V1489" class="gl" />
            <polyline :points="mini.line(highs)" fill="none" stroke="#f8f800" stroke-width="3" />
            <polyline :points="mini.line(maBlack)" fill="none" stroke="#111" />
            <polyline :points="mini.line(maTeal)" fill="none" stroke="#3a8a88" stroke-width="7" />
            <polyline :points="mini.line(maBlue)" fill="none" stroke="#1c5fd8" stroke-width="3" />
            <polyline :points="mini.line(maGold)" fill="none" stroke="#f5cc20" stroke-width="4" />
            <polyline :points="mini.line(maRed)" fill="none" stroke="#dc1010" stroke-width="3" />
            <path d="M588 1039H1628" stroke="#ee0808" stroke-width="6" />
            <path d="M588 1102H1628" stroke="#fccc08" stroke-width="6" />
            <path d="M588 1105.5H1816M588 1165.5H1816" stroke="#111" stroke-width="2" />
            <path d="M588 964H1816" stroke="#d02020" stroke-width="2" />
            <g v-for="(c, i) in miniCandles" :key="i">
              <line :x1="c.x" :x2="c.x" :y1="c.hi" :y2="c.lo" :stroke="c.color" />
              <rect :x="c.x - c.w / 2" :y="c.top" :width="c.w" :height="c.h" :fill="c.color" />
            </g>
            <path d="M1508 908h10v12h5l-10 12-10-12h5z" fill="#ffff00" />
            <path d="M1366 831H1402V837M1398 834l4 5 4-5z" class="con" />
            <path d="M588 1168H1875M588 1209H1875M588 1319H1875M588 1420H1875" stroke="#888" stroke-width="3" />
            <rect v-for="(v, k) in volume" :key="'v' + k" :x="mini.x(k) - 8" :y="1140 + v[0] / 3" width="17" :height="(205 - v[0]) / 3" :fill="v[1] ? RED : BLUE" />
            <rect v-for="(h, k) in hist" :key="'h' + k" :x="mini.x(k) - 8" :y="1140 + Math.min(h, 791) / 3" width="17" :height="Math.abs(h - 791) / 3 + 1" :fill="h > 791 ? '#0000ff' : '#ff0000'" />
            <path d="M588 1290H1816" stroke="#d02020" stroke-width="2" />
            <polygon :points="rsiArea" fill="#ff0000" />
            <path d="M588 1471.5H1816" stroke="#111" stroke-width="2" />
            <polyline v-for="(l, i) in subLines" :key="'s' + i" :points="l.p" fill="none" :stroke="l.c" :stroke-width="l.w" />
            <g v-for="m in minMarks" :key="m[0] + '-' + m[1]"><rect :x="m[0] + 1" :y="m[1] + 1" width="11" height="17" fill="#999" stroke="#fff" stroke-width="3" /></g>
            <text v-for="(l, i) in minLabels" :key="i" :x="l[0]" :y="l[1]" :fill="l[3]" :class="{ ko: l[4] }">{{ l[2] }}</text>
            <path d="M1816 758V1165" :stroke="RED" stroke-width="4" />
            <path d="M1816 1168V1489" stroke="#333" />
            <text v-for="t in minTicks" :key="t[0]" x="1822" :y="t[0] + 6">{{ t[1] }}</text>
            <text v-for="t in subTicks" :key="'t' + t[0]" x="1822" :y="t[0] + 6">{{ t[1] }}</text>
            <path d="M1818 832h4M1818 864h4M1818 894h4M1818 926h4M1818 1020h4M1818 1051h4M1818 1083h4M1818 1114h4M1818 1145h4M1817 1242h4M1817 1266h4M1817 1373h4M1817 1464h4" stroke="#111" stroke-width="2" />
            <path d="M1818 963L1828 933H1875V992H1828Z" :fill="RED" />
            <g fill="#fff"><text x="1822" y="951">40,900</text><text x="1821" y="969">+8,49%</text><text x="1820" y="987">▲3,200</text></g>
            <path d="M1818 1196l9-10h48v21h-48z" fill="#2a6fe6" />
            <path d="M1818 1293l9-12h48v23h-48zM1818 1410l9-11h48v21h-48zM1818 1487l9-11h48v20h-48z" :fill="RED" />
            <g fill="#fff"><text x="1832" y="1203">4.88</text><text x="1828" y="1299">19.75</text><text x="1820" y="1416">-184.14</text><text x="1828" y="1493">56.45</text></g>
            <g v-for="(r, i) in lixRows" :key="r[1]" :transform="`translate(${r[0]} ${r[1]})`" class="lix">
              <path d="M0 0h15v15H0zM19 0h15v15H19zM37 0h15v15H37zM55 0h15v15H55z" class="lbg" />
              <path d="M6 3V11H12M26 3V12M40 3H49V12H40Z" /><path d="M59 4l7 8M66 4l-7 8" :class="{ weak: i === 0 }" />
            </g>
          </svg>
        </div>
        <nav class="side" aria-label="그리기 도구">
          <button class="abtn">A</button>
          <button v-for="(t, i) in tools" :key="t.name" :aria-label="t.name" :class="{ gap: i === 3 }">
            <svg viewBox="0 0 24 24"><path v-if="t.d" :d="t.d" class="n" /><path v-if="t.f" :d="t.f" class="nf" /><path v-if="t.r" :d="t.r" class="r" /><path v-if="t.rf" :d="t.rf" class="rf" /><text v-if="t.t" x="1" y="9" class="tt">{{ t.t }}</text><text v-if="t.sub" x="12" y="24" class="ts">{{ t.sub }}</text></svg>
          </button>
        </nav>
      </div>
    </section>

    <!-- front window: one-minute chart -->
    <section class="front">
      <header class="bar">
        <h2></h2>
        <button v-for="c in caps" :key="c.name" :aria-label="c.name" :class="{ pin: c.name === '핀' }"><svg viewBox="0 0 24 24"><path :d="c.d" fill="none" stroke="currentColor" stroke-width="2" /><path v-if="c.f" :d="c.f" fill="currentColor" /></svg></button>
      </header>
      <div class="space"></div>
      <div class="body">
        <div class="plotcol">
          <div class="strip"><b></b><b>(1분)</b></div>
          <svg class="chart" viewBox="0 347 1030 1049">
            <rect x="0" y="347" width="1030" height="1049" fill="#fff" />
            <path v-for="p in mainTicks" :key="p" :d="`M0 ${main.y(p)}H942`" class="gm" />
            <path d="M189.5 347V1366M571 347V1366" class="gm" />
            <polyline :points="main.line(maBlack.slice(0, 26))" fill="none" stroke="#222" />
            <polyline :points="main.line(maTeal.slice(0, 26))" fill="none" stroke="#3a8a88" stroke-width="7" stroke-linecap="round" />
            <polyline :points="main.line(maBlue.slice(0, 26))" fill="none" stroke="#1862d0" stroke-width="3" />
            <polyline :points="main.line(maGold.slice(0, 26))" fill="none" stroke="#f5d428" stroke-width="4" />
            <polyline :points="main.line(maRed.slice(0, 26))" fill="none" stroke="#d81414" stroke-width="3" />
            <path :d="`M0 ${main.y(39700)}H897`" stroke="#ee0c0c" stroke-width="6" />
            <path :d="`M0 ${main.y(38700)}H897`" stroke="#fcd010" stroke-width="5" />
            <g v-for="(c, i) in mainCandles" :key="i">
              <line :x1="c.x" :x2="c.x" :y1="c.hi" :y2="c.lo" :stroke="c.color" stroke-width="2" />
              <rect :x="c.x - c.w / 2" :y="c.top" :width="c.w" :height="c.h" :fill="c.color" />
            </g>
            <g fill="#fff" stroke-width="1">
              <path d="M323 752l23 21v56h-45v-56z" stroke="#b83014" />
              <path d="M285 733l23 20v57h-45v-57z" stroke="#b83014" />
              <path d="M377 502h45v56l-22 22-23-22z" stroke="#1862b8" />
              <path d="M453 437h46v57l-23 21-23-21z" stroke="#1862b8" />
            </g>
            <g class="mk"><text x="285" y="788" fill="#c02c10">B</text><text x="323" y="808" fill="#c02c10">B</text><text x="400" y="555" fill="#1862b8">S</text><text x="476" y="491" fill="#1862b8">S</text></g>
            <text x="193" y="414" fill="#c02c10">42,850(2025/06/11-10:06)</text>
            <path d="M401 408H437V413M433 410l4 5 4-5z" class="con" />
            <path d="M944.5 347V1362" stroke="#b8331a" stroke-width="4" />
            <path d="M0 1367H1030M0 1395H1030M189.5 1367V1376M571 1367V1376" stroke="#222" stroke-width="2" />
            <template v-for="p in mainTicks" :key="p"><path :d="`M946 ${main.y(p)}h4`" stroke="#111" stroke-width="2" /><text x="950" :y="main.y(p) + 6">{{ fmt(p) }}</text></template>
            <text x="190" y="1388">10:00</text><text x="572" y="1388">10:10</text><text x="960" y="1388">10:18:00</text>
            <path d="M947 774L956 744H1030V803H956Z" :fill="RED" />
            <g fill="#fff"><text x="964" y="762">40,900</text><text x="960" y="781">+8,49%</text><text x="961" y="799">▲3,200</text></g>
            <g transform="translate(992 350)" class="lix"><path d="M0 0h15v15H0zM19 0h15v15H19z" class="lbg" /><path d="M6 3V11H12M26 3V12" /></g>
          </svg>
          <div class="scroll">
            <span class="thumb"></span><span class="rest"></span>
            <button aria-label="오른쪽"><svg viewBox="0 0 24 24"><path d="M9 5l7 7-7 7z" fill="#111" /></svg></button>
            <label class="range"><input type="range" min="0" max="100" value="12" aria-label="봉 간격" /></label>
            <button aria-label="이전"><svg viewBox="0 0 24 24"><path d="M18 4v16L5 12z" fill="#555" /></svg></button>
            <button aria-label="정지"><svg viewBox="0 0 24 24"><path d="M4 5h15v14H4z" fill="#555" /></svg></button>
            <button aria-label="재생"><svg viewBox="0 0 24 24"><path d="M6 4v16l13-8z" fill="#555" /></svg></button>
            <button class="z" aria-label="확대"><svg viewBox="0 0 24 24"><circle cx="11" cy="11" r="8" class="g" /><path d="M17 17l5 6M7 11h8M11 7v8" class="g" /></svg></button>
            <button class="z" aria-label="축소"><svg viewBox="0 0 24 24"><circle cx="11" cy="11" r="8" class="g" /><path d="M17 17l5 6M7 11h8" class="g" /></svg></button>
            <button class="z" aria-label="원래 크기"><svg viewBox="0 0 24 24"><circle cx="11" cy="11" r="8" class="g" /><path d="M11 11l11 11M10 15v-5h5" class="g" /></svg></button>
            <button class="z" aria-label="차트 설정"><svg viewBox="0 0 30 30"><path d="M12 3h6l1 4 4-1 3 5-3 4 3 4-3 5-4-1-1 4h-6l-1-4-4 1-3-5 3-4-3-4 3-5 4 1z" class="g" /><circle cx="15" cy="15" r="4" class="g" /></svg></button>
          </div>
          <div class="metal"></div>
          <div class="under"><i class="sep"></i><i class="wh"></i><i class="sep"></i><i class="wh"></i><i class="sep"></i><i class="cy"></i><i class="gr"></i><i class="ye"></i><i class="end"></i></div>
        </div>
        <nav class="side" aria-label="그리기 도구">
          <button class="abtn">A</button>
          <button v-for="(t, i) in tools" :key="t.name" :aria-label="t.name" :class="{ gap: i === 3 }">
            <svg viewBox="0 0 24 24"><path v-if="t.d" :d="t.d" class="n" /><path v-if="t.f" :d="t.f" class="nf" /><path v-if="t.r" :d="t.r" class="r" /><path v-if="t.rf" :d="t.rf" class="rf" /><text v-if="t.t" x="1" y="9" class="tt">{{ t.t }}</text><text v-if="t.sub" x="12" y="24" class="ts">{{ t.sub }}</text></svg>
          </button>
        </nav>
      </div>
    </section>
  </div>
</template>

<style>
body { background: #868b99; overflow: hidden; }
</style>

<style scoped>
.desktop { position: relative; height: 100vh; overflow: hidden; background: #868b99; font-family: "Noto Sans CJK KR", sans-serif; font-size: 18px; color: #222; }
.desktop * { box-sizing: border-box; }
button, input, select { font: inherit; color: inherit; margin: 0; padding: 0; border-radius: 0; }
button { display: flex; align-items: center; justify-content: center; border: 0; background: none; white-space: nowrap; overflow: hidden; }
h2 { margin: 0; font-size: 19px; font-weight: 400; }

/* order ticket */
.order { position: absolute; left: 0; top: 0; width: 586px; height: 182px; background: #f8f8fa; border-top: 3px solid #5c6980; border-right: 6px solid #6d7688; font-size: 22px; font-weight: 500; }
.orow { display: flex; gap: 3px; height: 37px; margin-top: 6px; padding-right: 110px; }
.orow + .orow { margin-top: 7px; }
.box { border: 2px solid #b9bcc2; background: #fff; }
.ob { border: 2px solid #a9afba; border-radius: 3px; background: #eceff6; height: 37px; line-height: 30px; }
.icons { display: flex; gap: 3px; margin-left: auto; }
.ic { width: 36px; }
.ic svg { width: 28px; height: 28px; flex: none; }
.stars { width: 57px; margin-right: 5px; text-align: center; font-weight: 700; border-left: 0; }
.yellow { width: 101px; background: #ffd02f; border-color: #f5c832; }
.w60 { width: 60px; }
.w79 { width: 79px; }
.w51 { width: 51px; }
.w57 { width: 57px; }
.name { width: 149px; margin-right: 6px; color: #c83838; border-color: #8b8f96; border-left: 0; }
.teal { width: 69px; background: #237570; border-color: #237570; color: #fff; font-weight: 700; }
.dim { width: 68px; color: #9a9da3; font-size: 22px; }
.dim + .dim { margin-left: 3px; }
.corner { width: 49px; margin-right: 5px; background: linear-gradient(135deg, #fff 0 83%, #777 83%); border-left: 0; }
.qty { display: flex; width: 108px; }
.qty input { width: 80px; text-align: right; padding-right: 10px; }
.spin { display: flex; flex-direction: column; width: 28px; }
.spin button { flex: 1; border: 1px solid #b9bcc2; background: #eff1f6; font-family: "DejaVu Sans", sans-serif; font-size: 11px; line-height: 1; color: #333; }
.on { width: 37px; background: #c4e0ff; border-color: #7fa8d8; }
.check { display: flex; align-items: center; gap: 7px; margin-left: 11px; line-height: 30px; }
.check input { appearance: none; width: 22px; height: 24px; border: 2px solid #8b8f96; background: #fff; }
.grid { display: grid; grid-template-columns: 1fr 26px 95px; grid-template-rows: 30px 10px; margin: 4px 10px 0 0; border-top: 2px solid #777; border-right: 2px solid #777; font-size: 20px; }
.gcell { padding-left: 69px; background: #fff; line-height: 22px; }
.gdrop { background: #eef1f7; font-family: "DejaVu Sans", sans-serif; font-size: 15px; }
.gred { background: #ffe8e8; border: 2px solid #e05858; }
.gval { grid-column: 1 / 3; display: flex; height: 20px; overflow: hidden; border-top: 1px solid #999; background: #fff; color: #d02030; font-size: 18px; line-height: 18px; }
.gval span { width: 154px; text-align: right; padding-right: 10px; border-right: 1px solid #bbb; }
.gval span + span { width: 96px; }
.gval i { flex: 1; background: #e6e4e2; }

/* chart windows */
.win { position: absolute; left: 585px; right: 0; display: flex; flex-direction: column; background: #f8f8f8; border-left: 3px solid #6d7688; border-right: 5px solid #6d7688; overflow: hidden; }
.day { top: 0; height: 630px; border-top: 3px solid #4c566a; }
.min { top: 630px; bottom: 0; border-top: 1px solid #6f7480; }
.bar { display: flex; align-items: center; gap: 9px; flex: none; height: 33px; background: #868b99; color: #d8dbe2; margin-right: -5px; padding: 0 6px 4px 0; }
.bar h2 { flex: 1; min-width: 0; overflow: hidden; white-space: nowrap; color: #f0f1f4; }
.bar svg { width: 24px; height: 24px; flex: none; display: block; }
.logo { margin-left: 4px; }
.tools { display: flex; gap: 2px; flex: none; height: 30px; margin: 1px 0 5px 2px; overflow: hidden; font-size: 18px; }
.tools > * { flex: none; }
.tb { border: 1px solid #a4a9b3; border-radius: 2px; background: #eceff5; height: 30px; line-height: 26px; }
.tb svg { width: 22px; height: 22px; flex: none; }
.w29 { width: 29px; } .w69 { width: 69px; } .w20 { width: 20px; } .w19 { width: 19px; } .w21 { width: 21px; } .w28 { width: 28px; } .w48 { width: 48px; } .w16 { width: 16px; } .w34 { width: 34px; } .w58 { width: 58px; }
select { appearance: none; border: 1px solid #ccc; background: #fff url("data:image/svg+xml,%3Csvg xmlns='http://www.w3.org/2000/svg' width='14' height='10'%3E%3Cpath d='M2 2l5 5 5-5' fill='none' stroke='%23444' stroke-width='3'/%3E%3C/svg%3E") no-repeat right 4px center; padding-left: 3px; }
.blank { width: 25px; border: 1px solid #ddd; background: #eef1f7; }
.code { width: 109px; font-size: 17px; }
.grp { display: flex; }
.s19 { width: 19px; } .s16 { width: 16px; }
.pale { opacity: .4; }
.badge { display: flex; flex-direction: column; width: 28px; background: #e05a66; color: #fff; font-size: 14px; line-height: 15px; text-align: center; }
.badge b { font-weight: 400; }
.badge b:first-child { background: #2858b8; }
.stock { width: 97px; border: 1px solid #999; background: #fff; color: #d03030; text-align: center; }
.tong { width: 26px; background: #237570; color: #fff; line-height: 26px; }
.drop { width: 23px; background: #fff; }
.drop svg { width: 20px; }
.pb { width: 30px; border: 1px solid #999ea8; background: #fff; color: #777; height: 30px; font-size: 17px; }
.pb.sel { background: #cfdcf0; color: #d82828; }
.pb.tint { background: #cfdcf0; color: #888; }
.pb.off { background: #d8d8da; color: #888; }
.num { border: 1px solid #c8c8cc; background: #fff; text-align: right; padding-right: 8px; font-size: 17px; }
.num.off { background: #ececec; color: #888; }
.slash { width: 16px; text-align: center; line-height: 28px; }
.quote { display: flex; gap: 3px; flex: none; height: 28px; margin-bottom: 6px; font-size: 18px; }
.quote > * { flex: none; height: 29px; }
.sync { width: 60px; line-height: 26px; color: #111; font-size: 20px; }
.q60 { width: 60px; } .q66 { width: 66px; }
.deep { background: #c2d6ee; border-color: #4a6a98; }
.light { background: #d6eaff; border-color: #a8c4e8; }
.quote .vals { display: flex; flex: 1; min-width: 0; background: #fff; border: 1px solid #ddd; line-height: 26px; text-align: right; }
.vals > * { flex: none; }
.vals .r { color: #e02828; }
.vals em { width: 52px; background: #f1f1f1; text-align: center; font-style: normal; margin-left: 5px; }
.v1 { width: 96px; } .v2 { width: 24px; } .v3 { width: 82px; } .v4 { width: 78px; } .v5 { width: 106px; } .v6 { width: 89px; } .v7 { width: 90px; } .v8 { width: 86px; }
.v2 { font-family: "DejaVu Sans", sans-serif; }
.bl { color: #1464d8; } .rd { color: #e03030; }
.body { display: flex; flex: 1; min-height: 0; }
.plotcol { flex: 1; min-width: 0; display: flex; flex-direction: column; }
.strip { display: flex; justify-content: space-between; align-items: center; flex: none; height: 24px; padding-left: 7px; background: #dde2ea; color: #35507a; font-size: 22px; line-height: 24px; overflow: hidden; }
.chart { display: block; width: 100%; height: auto; flex: none; }
.chart text { font-size: 17px; white-space: pre; }
.chart text.ko { font-size: 18px; }
.chart .mk text { font-family: "Noto Sans", sans-serif; font-size: 24px; text-anchor: middle; }
.gl { stroke: #d8d8d8; stroke-width: 2; fill: none; }
.gm { stroke: #dadada; stroke-width: 2; fill: none; }
.con { stroke: #c02c10; fill: none; stroke-width: 2; }
.con.b { stroke: #1862b8; }
.lix path { fill: none; stroke: #000; stroke-width: 2; }
.lix .lbg { fill: #dcdcdc; stroke: none; }
.lix .weak { stroke: #999; }

.side { flex: none; width: 31px; background: #e1e7f4; border-left: 2px solid #a9afba; display: flex; flex-direction: column; overflow: hidden; }
.side button { flex: none; height: 30px; }
.side svg { width: 22px; height: 22px; overflow: visible; }
.side .abtn { height: 29px; margin-bottom: 4px; border: 2px solid #8b93a4; background: #e6ebf8; font-weight: 700; color: #111; }
.side .gap { height: 32px; border-bottom: 1px solid #f4f4f4; }
.n { fill: none; stroke: #2f4f7f; stroke-width: 2; }
.nf { fill: #2f4f7f; }
.r { fill: none; stroke: #d8323c; stroke-width: 2; }
.rf { fill: #d8323c; }
.tt { font-size: 12px; font-weight: 700; fill: #d8323c; font-family: "Liberation Sans", sans-serif; }
.ts { font-size: 12px; font-weight: 700; fill: #2f4f7f; text-anchor: middle; font-family: "Liberation Sans", sans-serif; }

/* front window */
.front { position: absolute; left: 0; top: 178px; bottom: 0; width: 56%; display: flex; flex-direction: column; background: #f9f9f9; border-right: 4px solid #234775; }
.front .bar { height: 35px; margin-right: -4px; padding-right: 10px; background: #234775; color: #fff; }
.front .pin { color: #4a90e8; }
.space { flex: none; height: 110px; }
.front .side { width: 36px; border-right: 5px solid #f6f7fa; }
.scroll { display: flex; flex: none; height: 28px; border-bottom: 2px solid #777; background: #f0f0f0; }
.scroll .thumb { flex: 447; background: #c8c8c8; border: 2px solid #dcdcdc; }
.scroll .rest { flex: 213; }
.scroll button { width: 26px; flex: none; border-left: 1px solid #888; background: #f6f6f6; }
.scroll button.z { width: 27px; border-left: 0; }
.scroll button svg { width: 22px; height: 22px; flex: none; }
.range { width: 155px; flex: none; border-left: 1px solid #888; padding: 0 7px; background: repeating-linear-gradient(90deg, #111 0 1px, transparent 1px 6px) 8px 100% / 141px 5px no-repeat; }
.range input { appearance: none; display: block; width: 100%; height: 19px; background: linear-gradient(#777, #777) 0 4px / 100% 3px no-repeat; }
.range input::-webkit-slider-thumb { appearance: none; width: 8px; height: 16px; border: 2px solid #777; border-left: 1px solid #fff; border-top: 0; background: #f0f0f0; }
.g { fill: none; stroke: #777; stroke-width: 2; }
.metal { flex: none; height: 30px; background: linear-gradient(#ececec, #8c8c8c); border-bottom: 1px solid #777; }
.under { display: flex; flex: none; height: 25px; margin-top: 3px; border-bottom: 2px solid #777; }
.under i { flex: none; }
.under .sep { width: 18px; background: linear-gradient(90deg, #8b93a4 0 2px, #eee 2px 6px, #6d7688 6px 12px, #eee 12px 16px, #777 16px); }
.under .wh { flex: 280; background: #fff; }
.under .cy { width: 17px; background: #aeeeec; }
.under .gr { flex: 356; background: #c5c5c5; }
.under .ye { width: 19px; background: #ffff00; }
.under .end { width: 31px; background: #f4f4f4; }
</style>
